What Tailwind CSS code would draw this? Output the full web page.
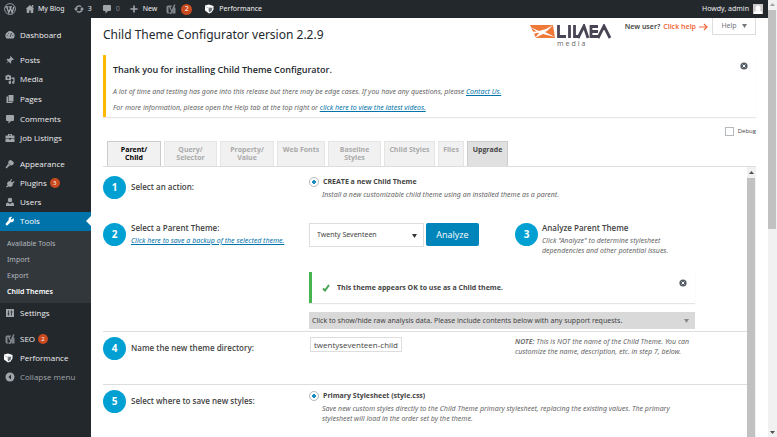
<!doctype html>
<html lang="en">
<head>
    <meta charset="UTF-8">
    <meta name="viewport" content="width=device-width, initial-scale=1.0">
    <script src="https://cdn.jsdelivr.net/npm/@tailwindcss/browser@4"></script>
    <title>Child Theme Configurator</title>
</head>
<body class="h-screen flex overflow-hidden bg-white font-['Open_Sans','Noto_Sans',sans-serif] text-[8px] leading-[10px] text-[#444]">
<svg class="hidden">
    <symbol id="wp" viewBox="0 0 20 20"><circle cx="10" cy="10" r="9" fill="none" stroke="currentColor" stroke-width="1.500"/><path d="M2 6.500h5.500M4.500 6.500l3.500 9.500L10.500 9M8.500 6.500h5M10 6.500l3.500 9.500L16.500 6" fill="none" stroke="currentColor" stroke-width="2.200"/></symbol>
    <symbol id="home" viewBox="0 0 20 20"><path d="M10 2l8 7-1.500 1.500V18h-5v-5h-3v5h-5v-7.500L2 9zM14 2h2.500v5L14 5z" fill="currentColor"/></symbol>
    <symbol id="update" viewBox="0 0 20 20"><path d="M4 11a6 6 0 0 1 10-5.500M16 9a6 6 0 0 1-10 5.500" fill="none" stroke="currentColor" stroke-width="2.800"/><path d="M0 9h8l-4 5zM12 11h8l-4-5z" fill="currentColor"/></symbol>
    <symbol id="comment" viewBox="0 0 20 20"><path d="M4 2h12q2 0 2 2v8q0 2-2 2h-4l-5 5v-5H4q-2 0-2-2V4q0-2 2-2z" fill="currentColor"/></symbol>
    <symbol id="plus" viewBox="0 0 20 20"><path d="M10 1v18M1 10h18" stroke="currentColor" stroke-width="4"/></symbol>
    <symbol id="yoast" viewBox="0 0 20 20"><path d="M4 3h8l-1 3H5v11h3l-1 2H4q-3 0-3-3V6q0-3 3-3zM16 1h3l-6 16q-1 3-5 3v-3q2 0 2.500-2L6 6h3l2.500 6zM17 6q2 1 2 3v10h-6z" fill="currentColor"/></symbol>
    <symbol id="cube" viewBox="0 0 20 20"><path d="M2 3l8-2 9 3v7l-4 6-5 2-8-6z" fill="#fff"/><path d="M9 9l8-2-2 7-5 3z" fill="#6b7177"/><path d="M3 5l6 3 5-2" fill="none" stroke="#8a8f94"/></symbol>
    <symbol id="gauge" viewBox="0 0 20 20"><path d="M3 17a9 9 0 1 1 14 0z" fill="currentColor"/><path d="M10 14l3-8M3.500 11h2M6 6l1.500 1.500M14.500 11h2" stroke="#23282d" stroke-width="1.500"/></symbol>
    <symbol id="pin" viewBox="0 0 20 20"><path d="M11 2l7 7-2 1-1-.5-3 3 .5 3.500L11 17l-4-4-5 5 4-6-3-3 1.500-1.500L8 8l3-3-1-1z" fill="currentColor"/></symbol>
    <symbol id="media" viewBox="0 0 20 20"><path d="M1 3h3l1-1.500h3L9 3h3v9H1zM13 7h6v10a2.500 2.500 0 1 1-2.500-2.500V10H13zM5 14h4V13h3v4a2.500 2.500 0 1 1-2.500-2z" fill="currentColor"/><circle cx="6.500" cy="7.500" r="2.200" fill="#23282d"/></symbol>
    <symbol id="pages" viewBox="0 0 20 20"><path d="M7 2h10v13H7zM3 5h3v11h9v2H3z" fill="currentColor"/></symbol>
    <symbol id="case" viewBox="0 0 20 20"><path d="M6 5V2h8v3h4q1 0 1 1v4H1V6q0-1 1-1zM8 5h4V3.500H8zM1 11h7v2h4v-2h7v7H1z" fill="currentColor" fill-rule="evenodd"/></symbol>
    <symbol id="brush" viewBox="0 0 20 20"><path d="M8 3l4-1 6 5-2 5-4 1-6-5zM6 9l5 4-3 1-5 5-2-2 4-5z" fill="currentColor"/></symbol>
    <symbol id="plug" viewBox="0 0 20 20"><path d="M12 2l2 1-2 4 2 2 4-3 1 2-4 4 1 2-4 4-5-1-4 2-1-2 3-2-1-5 4-4 2 1z" fill="currentColor"/></symbol>
    <symbol id="user" viewBox="0 0 20 20"><circle cx="10" cy="6" r="4.500" fill="currentColor"/><path d="M2 18v-3q0-4 4-4l4 3 4-3q4 0 4 4v3z" fill="currentColor"/></symbol>
    <symbol id="wrench" viewBox="0 0 20 20"><path d="M17 4l-3 3-2-.5L11.500 5l3-3q-4-1.500-6.500 1.500Q6.500 5.500 7.500 8L1.500 15q-1 1.500.5 3t3 .5l6.500-6.500q3 1 5-1 2.500-3 .5-7z" fill="currentColor"/></symbol>
    <symbol id="sliders" viewBox="0 0 20 20"><path d="M2 2h16v16H2z" fill="currentColor"/><path d="M7 5v10M5 12h4M13 5v10M11 8h4" stroke="#23282d" stroke-width="1.500"/></symbol>
    <symbol id="collapse" viewBox="0 0 20 20"><circle cx="10" cy="10" r="9" fill="currentColor"/><path d="M12 5v10l-5-5z" fill="#23282d"/></symbol>
    <symbol id="dismiss" viewBox="0 0 20 20"><circle cx="10" cy="10" r="9" fill="currentColor"/><path d="M6.500 6.500l7 7M13.500 6.500l-7 7" stroke="#fff" stroke-width="2.500"/></symbol>
</svg>

<div class="flex-1 min-w-0 flex flex-col">
    <header class="h-[18px] shrink-0 bg-[#23282d] text-[#eee] flex items-center pl-1 pr-[5px] font-['Noto_Sans','Open_Sans',sans-serif] text-[7px]">
        <a href="#" aria-label="WordPress" class="text-[#a0a5aa] mr-[9px]"><svg class="size-3"><use href="#wp"/></svg></a>
        <a href="#" class="flex items-center gap-[3px] mr-[9px]"><svg class="size-[10px] text-[#a0a5aa]"><use href="#home"/></svg>My Blog</a>
        <a href="#" class="flex items-center gap-1 mr-[10px]"><svg class="size-[10px] text-[#a0a5aa]"><use href="#update"/></svg>3</a>
        <a href="#" class="flex items-center gap-1 mr-[10px] text-[#82878c]"><svg class="size-[10px] text-[#a0a5aa]"><use href="#comment"/></svg>0</a>
        <a href="#" class="flex items-center gap-[5px] mr-[9px]"><svg class="size-2 text-[#a0a5aa]"><use href="#plus"/></svg>New</a>
        <a href="#" class="flex items-center gap-[5px] mr-3"><svg class="size-[10px] text-[#82878c]"><use href="#yoast"/></svg><span class="size-[11px] rounded-full bg-[#ca4a1f] text-white text-center">2</span></a>
        <a href="#" class="flex items-center gap-[5px]"><svg class="size-[10px]"><use href="#cube"/></svg>Performance</a>
        <a href="#" class="ml-auto flex items-center gap-1">Howdy, admin
            <svg class="size-[10px] bg-[#ccc]" viewBox="0 0 10 10"><circle cx="5" cy="4" r="2.500" fill="#fff"/><path d="M1 10q0-4 4-4t4 4z" fill="#fff"/></svg>
        </a>
    </header>

    <div class="flex-1 min-h-0 flex">
        <nav class="w-[91px] shrink-0 bg-[#23282d] text-[#eee] pt-[7px]">
            <a href="#" class="h-[19px] flex items-center gap-[5px] pl-[5px]"><svg class="size-[10px] text-[#a0a5aa]"><use href="#gauge"/></svg>Dashboard</a>
            <div class="mt-[6px] h-[98px] grid auto-rows-fr">
                <a href="#" class="flex items-center gap-[5px] pl-[5px]"><svg class="size-[10px] text-[#a0a5aa]"><use href="#pin"/></svg>Posts</a>
                <a href="#" class="flex items-center gap-[5px] pl-[5px]"><svg class="size-[10px] text-[#a0a5aa]"><use href="#media"/></svg>Media</a>
                <a href="#" class="flex items-center gap-[5px] pl-[5px]"><svg class="size-[10px] text-[#a0a5aa]"><use href="#pages"/></svg>Pages</a>
                <a href="#" class="flex items-center gap-[5px] pl-[5px]"><svg class="size-[10px] text-[#a0a5aa]"><use href="#comment"/></svg>Comments</a>
                <a href="#" class="flex items-center gap-[5px] pl-[5px]"><svg class="size-[10px] text-[#a0a5aa]"><use href="#case"/></svg>Job Listings</a>
            </div>
            <div class="mt-[6px] h-[77px] grid auto-rows-fr">
                <a href="#" class="flex items-center gap-[5px] pl-[5px]"><svg class="size-[10px] text-[#a0a5aa]"><use href="#brush"/></svg>Appearance</a>
                <a href="#" class="flex items-center gap-[5px] pl-[5px]"><svg class="size-[10px] text-[#a0a5aa]"><use href="#plug"/></svg>Plugins<span class="-ml-[2px] size-[10px] rounded-full bg-[#ca4a1f] text-white text-[6px] text-center">3</span></a>
                <a href="#" class="flex items-center gap-[5px] pl-[5px]"><svg class="size-[10px] text-[#a0a5aa]"><use href="#user"/></svg>Users</a>
                <a href="#" class="relative flex items-center gap-[5px] pl-[5px] bg-[#0073aa] text-white"><svg class="size-[10px]"><use href="#wrench"/></svg>Tools<svg class="absolute right-0 w-[5px] h-[10px]" viewBox="0 0 5 10"><path d="M5 0v10L0 5z" fill="#fff"/></svg></a>
            </div>
            <div class="h-[72px] bg-[#32373c] text-[#b4b9be] grid auto-rows-fr items-center pt-[5px] pb-[3px] pl-[7px] text-[7px] font-['Noto_Sans','Open_Sans',sans-serif]">
                <a href="#">Available Tools</a>
                <a href="#">Import</a>
                <a href="#">Export</a>
                <a href="#" class="text-white font-semibold">Child Themes</a>
            </div>
            <a href="#" class="h-5 flex items-center gap-[5px] pl-[5px]"><svg class="size-[10px] text-[#a0a5aa]"><use href="#sliders"/></svg>Settings</a>
            <div class="mt-[6px] h-[58px] grid auto-rows-fr">
                <a href="#" class="flex items-center gap-[5px] pl-[5px]"><svg class="size-[10px] text-[#82878c]"><use href="#yoast"/></svg>SEO<span class="-ml-[2px] size-[10px] rounded-full bg-[#ca4a1f] text-white text-[6px] text-center">2</span></a>
                <a href="#" class="flex items-center gap-[7px] pl-[3px]"><svg class="size-[10px]"><use href="#cube"/></svg>Performance</a>
                <button class="flex items-center gap-[5px] pl-[5px] text-[#a0a5aa]"><svg class="size-[10px]"><use href="#collapse"/></svg>Collapse menu</button>
            </div>
        </nav>

        <main class="flex-1 min-w-0 flex flex-col px-3">
            <div class="h-[37px] shrink-0 flex items-start">
                <h1 class="flex-1 pt-[9px] font-['Noto_Sans','Open_Sans',sans-serif] text-[12px] leading-4 text-[#23282d] whitespace-nowrap">Child Theme Configurator version 2.2.9</h1>
                <svg class="w-[84px] h-[24px] mt-[6px] mr-[11px]" viewBox="0 0 84 24" role="img" aria-label="Lilaea Media">
                    <path d="M0 1h23l2 13H6z" fill="#f0793a"/>
                    <path d="M0 3l9 4 7-2 7-4-6 6-2 1 10 5-12-3-8 4 4-5zM1 8l9-1 1 1-8 2z" fill="#fff"/>
                    <g fill="none" stroke="#4a4555" stroke-width="2.800"><path d="M28.500 1v11.500H36M39.500 1v13M44.500 1v11.500H50M48 14l6-12 4 12M68 2.500h-7v10h7M62 7.500h6M68 14l6-12 6 12"/></g>
                    <text x="27" y="22" font-size="7" letter-spacing="2" fill="#666">media</text>
                </svg>
                <p class="mt-1 mr-1 flex items-center gap-[3px] font-['Noto_Sans','Open_Sans',sans-serif] text-[7px] font-semibold">New user? <a href="#" class="flex items-center gap-[3px] text-[#f0693a]">Click help <svg class="w-[9px] h-2" viewBox="0 0 9 8"><path d="M0 4h8M5 1l3 3-3 3" fill="none" stroke="currentColor" stroke-width="1.200"/></svg></a></p>
                <button class="w-11 h-[17px] border border-t-0 border-[#ddd] flex items-center justify-center gap-[5px] font-['Noto_Sans','Open_Sans',sans-serif] text-[7px] text-[#72777c]">Help <svg class="w-[5px] h-1" viewBox="0 0 5 4"><path d="M0 0h5L2.500 4z" fill="currentColor"/></svg></button>
            </div>

            <section class="relative h-[62px] shrink-0 border-l-[3px] border-l-[#ffb900] shadow-[0_1px_1px_rgba(0,0,0,0.1)] pl-[7px] pt-[9px]">
                <h2 class="text-[9px] leading-3 font-semibold text-[#23282d]">Thank you for installing Child Theme Configurator.</h2>
                <p class="mt-[11px] italic text-[7px] font-['Noto_Sans','Open_Sans',sans-serif] text-[#666]">A lot of time and testing has gone into this release but there may be edge cases. If you have any questions, please <a href="#" class="text-[#0073aa] underline">Contact Us.</a></p>
                <p class="mt-[6px] italic text-[7px] font-['Noto_Sans','Open_Sans',sans-serif] text-[#666]">For more information, please open the Help tab at the top right or <a href="#" class="text-[#0073aa] underline">click here to view the latest videos.</a></p>
                <button aria-label="Dismiss" class="absolute right-2 top-[7px] text-[#555d66]"><svg class="size-2"><use href="#dismiss"/></svg></button>
            </section>

            <div class="mt-2 shrink-0 h-3 flex justify-end">
                <label class="flex items-center gap-1 text-[6px]"><input type="checkbox" class="appearance-none size-[9px] border border-[#b4b9be]">Debug</label>
            </div>

            <div class="mt-1 h-[26px] shrink-0 pl-1 flex gap-[3px] border-b border-[#ddd] text-[7px] leading-[8px] font-bold text-[#aaa] text-center">
                <button class="w-[54px] border border-b-0 border-[#ccc] bg-[#f1f1f1] text-black">Parent/<br>Child</button>
                <button class="w-[53px] border border-b-0 border-[#e5e5e5] bg-[#f1f1f1]">Query/<br>Selector</button>
                <button class="w-[54px] border border-b-0 border-[#e5e5e5] bg-[#f1f1f1]">Property/<br>Value</button>
                <button class="w-12 border border-b-0 border-[#e5e5e5] bg-[#f1f1f1] pb-2">Web Fonts</button>
                <button class="w-[53px] border border-b-0 border-[#e5e5e5] bg-[#f1f1f1]">Baseline<br>Styles</button>
                <button class="w-[51px] border border-b-0 border-[#e5e5e5] bg-[#f1f1f1] pb-2">Child Styles</button>
                <button class="w-[26px] border border-b-0 border-[#e5e5e5] bg-[#f1f1f1] pb-2">Files</button>
                <button class="w-[41px] border border-b-0 border-[#ccc] bg-[#e0e0e0] text-[#444] pb-2">Upgrade</button>
            </div>

            <div class="flex-1 min-h-0 flex">
                <form class="flex-1 min-w-0 overflow-hidden">
                    <div class="h-12 flex pt-[9px]">
                        <span class="size-[23px] shrink-0 rounded-full bg-[#00a0d2] text-white text-[10px] leading-[23px] font-bold text-center">1</span>
                        <h3 class="w-[183px] shrink-0 pl-[5px] pt-[6px] font-semibold">Select an action:</h3>
                        <div class="flex-1 pt-px">
                            <label class="flex items-center gap-1 text-[7px] font-bold"><input type="radio" name="action" checked class="appearance-none size-[10px] rounded-full border border-[#b4b9be] bg-[radial-gradient(#1e8cbe_0_2px,transparent_2px)]">CREATE a new Child Theme</label>
                            <p class="pl-[13px] pt-[3px] italic text-[7px] font-['Noto_Sans','Open_Sans',sans-serif] text-[#666]">Install a new customizable child theme using an installed theme as a parent.</p>
                        </div>
                    </div>
                    <div class="h-[116px] flex pt-2">
                        <span class="size-[23px] shrink-0 rounded-full bg-[#00a0d2] text-white text-[10px] leading-[23px] font-bold text-center">2</span>
                        <div class="w-[183px] shrink-0 pl-[5px]">
                            <label for="parent" class="block font-semibold">Select a Parent Theme:</label>
                            <a href="#" class="block mt-[3px] italic text-[7px] font-['Noto_Sans','Open_Sans',sans-serif] text-[#0073aa] underline">Click here to save a backup of the selected theme.</a>
                        </div>
                        <div class="flex-1 min-w-0 pr-[52px]">
                            <div class="h-[31px] flex">
                                <div class="relative">
                                    <select id="parent" class="appearance-none w-[115px] h-6 border border-[#ddd] pl-[7px] text-[7px] font-['Noto_Sans','Open_Sans',sans-serif]"><option>Twenty Seventeen</option></select>
                                    <svg class="absolute right-[7px] top-[11px] w-[5px] h-1" viewBox="0 0 5 4"><path d="M0 0h5L2.500 4z" fill="#333"/></svg>
                                </div>
                                <button type="button" class="ml-[2px] w-[53px] h-[23px] rounded-[2px] bg-[#0085ba] text-white text-[9px]">Analyze</button>
                                <span class="ml-9 size-[23px] shrink-0 rounded-full bg-[#00a0d2] text-white text-[10px] leading-[23px] font-bold text-center">3</span>
                                <div class="pl-1 whitespace-nowrap">
                                    <h3 class="font-semibold">Analyze Parent Theme</h3>
                                    <p class="pt-[3px] italic text-[7px] font-['Noto_Sans','Open_Sans',sans-serif] text-[#666]">Click "Analyze" to determine stylesheet<br>dependencies and other potential issues.</p>
                                </div>
                            </div>
                            <div class="mt-[18px] h-[31px] flex items-center border-l-[3px] border-l-[#46b450] shadow-[0_1px_1px_rgba(0,0,0,0.1)] pl-[10px] pr-2 text-[7px] font-bold">
                                <svg class="size-2 mr-[7px]" viewBox="0 0 8 8"><path d="M1 4.500L3 6.500 7 1" fill="none" stroke="#46a450" stroke-width="2"/></svg>This theme appears OK to use as a Child theme.
                                <button type="button" aria-label="Dismiss" class="ml-auto mb-[10px] text-[#555d66]"><svg class="size-2"><use href="#dismiss"/></svg></button>
                            </div>
                            <button type="button" class="mt-[9px] w-full h-[17px] flex items-center justify-between bg-[#d9d9d9] pl-[3px] pr-[6px] font-['Noto_Sans','Open_Sans',sans-serif] text-[7px]">Click to show/hide raw analysis data. Please include contents below with any support requests.
                                <svg class="w-[5px] h-1" viewBox="0 0 5 4"><path d="M0 0h5L2.500 4z" fill="#888"/></svg>
                            </button>
                        </div>
                    </div>
                    <div class="h-[53px] flex pt-[5px] border-t border-[#ddd]">
                        <span class="size-[23px] shrink-0 rounded-full bg-[#00a0d2] text-white text-[10px] leading-[23px] font-bold text-center">4</span>
                        <label for="directory" class="w-[184px] shrink-0 pl-[5px] pt-[6px] font-semibold">Name the new theme directory:</label>
                        <input id="directory" type="text" value="twentyseventeen-child" class="w-[92px] h-[15px] border border-[#ddd] px-[3px]">
                        <p class="ml-auto w-[232px] whitespace-nowrap italic text-[7px] font-['Noto_Sans','Open_Sans',sans-serif] text-[#666]"><b class="font-semibold">NOTE:</b> This is NOT the name of the Child Theme. You can<br>customize the name, description, etc. in step 7, below.</p>
                    </div>
                    <div class="h-[53px] flex pt-[5px] border-t border-[#ddd]">
                        <span class="size-[23px] shrink-0 rounded-full bg-[#00a0d2] text-white text-[10px] leading-[23px] font-bold text-center">5</span>
                        <h3 class="w-[183px] shrink-0 pl-[5px] pt-[6px] font-semibold">Select where to save new styles:</h3>
                        <div class="flex-1 pt-px">
                            <label class="flex items-center gap-1 text-[7px] font-bold"><input type="radio" name="stylesheet" checked class="appearance-none size-[10px] rounded-full border border-[#b4b9be] bg-[radial-gradient(#1e8cbe_0_2px,transparent_2px)]">Primary Stylesheet (style.css)</label>
                            <p class="pl-[13px] pt-[3px] italic text-[7px] font-['Noto_Sans','Open_Sans',sans-serif] text-[#666]">Save new custom styles directly to the Child Theme primary stylesheet, replacing the existing values. The primary<br>stylesheet will load in the order set by the theme.</p>
                        </div>
                    </div>
                </form>
                <div class="w-[9px] shrink-0 bg-[#f1f1f1] flex flex-col"><svg class="h-[11px]" viewBox="0 0 9 11"><path d="M2 7h5L4.500 4z" fill="#505050"/></svg><div class="flex-1 mr-px bg-[#c1c1c1]"></div></div>
            </div>
        </main>
    </div>
</div>
<div class="w-[9px] shrink-0 bg-[#f1f1f1] flex flex-col">
    <svg class="h-[10px] shrink-0" viewBox="0 0 9 10"><path d="M2 6h5L4.500 3z" fill="#a3a3a3"/></svg>
    <div class="h-1/2 mr-px bg-[#c1c1c1]"></div>
    <svg class="h-[10px] shrink-0 mt-auto" viewBox="0 0 9 10"><path d="M2 4h5L4.500 7z" fill="#505050"/></svg>
</div>
</body>
</html>
